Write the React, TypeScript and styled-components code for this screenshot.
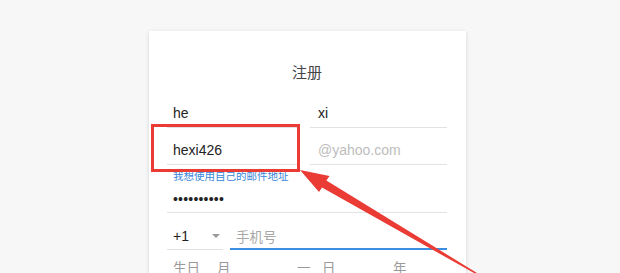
import React from "react";
import styled, { createGlobalStyle } from "styled-components";

const GlobalStyle = createGlobalStyle`
  html, body {
    margin: 0;
    padding: 0;
    background: #f7f7f7;
    overflow: hidden;
  }
  body {
    font-family: "Liberation Sans", Arial, "Noto Sans CJK SC", sans-serif;
  }
`;

const Page = styled.div`
  position: relative;
  width: 620px;
  height: 273px;
  overflow: hidden;
`;

const Card = styled.div`
  margin-left: 149px;
  margin-top: 31px;
  width: 317px;
  height: 260px;
  box-sizing: border-box;
  padding: 31px 19px 0 18px;
  background: #fff;
  box-shadow: 0 1px 4px rgba(0, 0, 0, 0.14);
`;

const Title = styled.div`
  text-align: center;
  font-family: "Noto Sans CJK SC", sans-serif;
  font-size: 15px;
  line-height: 20px;
  color: #444;
  margin-bottom: 9px;
`;

const Row = styled.div<{ $cols: string; $gap: number }>`
  display: grid;
  grid-template-columns: ${(p) => p.$cols};
  column-gap: ${(p) => p.$gap}px;
  align-items: end;
`;

const Field = styled.div<{ $pt?: number; $pb?: number; $pl?: number; $active?: boolean }>`
  padding: ${(p) => p.$pt ?? 12}px 0 ${(p) => p.$pb ?? 4}px ${(p) => p.$pl ?? 6}px;
  line-height: 20px;
  font-size: 14px;
  color: #222;
  border-bottom: ${(p) => (p.$active ? "2px solid #3b8ee0" : "1px solid #e2e2e2")};
  display: flex;
  align-items: center;
  justify-content: space-between;
`;

const Placeholder = styled.span<{ $cjk?: boolean }>`
  color: ${(p) => (p.$cjk ? "#a8a8a8" : "#bdbdbd")};
  font-family: ${(p) =>
    p.$cjk ? '"Noto Sans CJK SC", sans-serif' : '"Liberation Sans", Arial, sans-serif'};
  font-size: ${(p) => (p.$cjk ? "13.5px" : "14px")};
`;

const Link = styled.div`
  margin-top: 4px;
  padding-left: 6px;
  font-family: "Noto Sans CJK SC", sans-serif;
  font-size: 10.5px;
  line-height: 14px;
  color: #3a86d8;
`;

const Dots = styled.span`
  letter-spacing: 0.2px;
  font-size: 14px;
`;

const Caret = styled.span`
  width: 0;
  height: 0;
  margin-right: 3px;
  border-left: 4px solid transparent;
  border-right: 4px solid transparent;
  border-top: 4px solid #9a9a9a;
`;

const BirthRow = styled.div`
  display: flex;
  margin-top: 7px;
  padding-left: 6px;
  line-height: 20px;
  font-family: "Noto Sans CJK SC", sans-serif;
  font-size: 13.5px;
  color: #9a9a9a;
`;

const BirthPart = styled.span<{ $w: number }>`
  width: ${(p) => p.$w}px;
  flex: none;
`;

const Overlay = styled.svg`
  position: absolute;
  left: 0;
  top: 0;
  pointer-events: none;
`;

function Annotation() {
  return (
    <Overlay width="620" height="273" viewBox="0 0 620 273">
      <rect x="152.5" y="125.5" width="146" height="45" fill="none" stroke="#ea3b35" strokeWidth="3" />
      <polygon
        points="300,170 319,192 322,187.6 474,273 477,273 326.4,180.4 329.5,176"
        fill="#ea3b35"
      />
    </Overlay>
  );
}

export default function App() {
  return (
    <Page>
      <GlobalStyle />
      <Card>
        <Title>注册</Title>
        <Row $cols="130px 1fr" $gap={13}>
          <Field>he</Field>
          <Field $pl={8}>xi</Field>
        </Row>
        <Row $cols="130px 1fr" $gap={13}>
          <Field>hexi426</Field>
          <Field $pl={8}>
            <Placeholder>@yahoo.com</Placeholder>
          </Field>
        </Row>
        <Link>我想使用自己的邮件地址</Link>
        <Field $pt={6} $pb={3}>
          <Dots>••••••••••</Dots>
        </Field>
        <Row $cols="56px 1fr" $gap={7}>
          <Field $pt={13} $pb={3}>
            +1
            <Caret />
          </Field>
          <Field $pt={13} $pb={2} $active>
            <Placeholder $cjk>手机号</Placeholder>
          </Field>
        </Row>
        <BirthRow>
          <BirthPart $w={44}>生日</BirthPart>
          <BirthPart $w={80}>月</BirthPart>
          <BirthPart $w={25}>一</BirthPart>
          <BirthPart $w={71}>日</BirthPart>
          <BirthPart $w={30}>年</BirthPart>
        </BirthRow>
      </Card>
      <Annotation />
    </Page>
  );
}
